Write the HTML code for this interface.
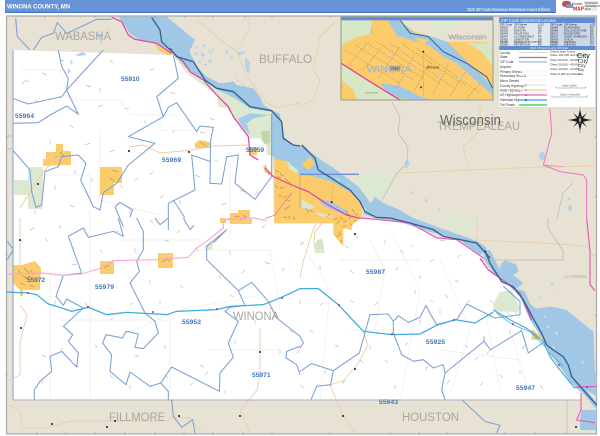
<!DOCTYPE html>
<html><head><meta charset="utf-8"><style>
html,body{margin:0;padding:0;background:#fff;width:600px;height:436px;overflow:hidden}
svg{display:block}
text{font-family:"Liberation Sans",sans-serif}
</style></head><body>
<svg width="600" height="436" viewBox="0 0 600 436" xmlns="http://www.w3.org/2000/svg">
<rect width="600" height="436" fill="#fff"/>
<!-- header -->
<rect x="5" y="0" width="551" height="12" fill="#6593d6"/>
<rect x="5" y="12" width="551" height="1" fill="#3f70c4"/>
<text x="7" y="8.5" font-size="6.2" font-weight="bold" fill="#fff" textLength="63" lengthAdjust="spacingAndGlyphs">WINONA COUNTY, MN</text>
<text x="467" y="11" font-size="4.3" font-weight="bold" fill="#dfe8f7" textLength="83" lengthAdjust="spacingAndGlyphs">2020 ZIP Code Business Reference Insert Edition</text>
<!-- logo -->
<rect x="562" y="1" width="9" height="6" rx="3" fill="#d04a48"/>
<rect x="566" y="4" width="7" height="4" fill="#8b8fc4"/>
<text x="572" y="5" font-size="3.4" fill="#445">Market</text>
<text x="573" y="10.5" font-size="5" font-weight="bold" fill="#d02020">MAPS</text>
<rect x="584" y="1" width="13" height="10" fill="#e9e9e9"/>
<text x="585" y="4" font-size="2.6" fill="#444">BUSINESS</text>
<text x="585" y="7" font-size="2.6" fill="#444">REFERENCE</text>
<text x="585" y="10" font-size="2.6" fill="#444">MAP</text>

<!-- map background -->
<rect x="6.5" y="16" width="590" height="418" fill="#e7e2d4" stroke="#a8a8a8" stroke-width="1.2"/>

<!-- white county -->
<path d="M13 50L173 55L187 73L203 83L220 98L227 108L248 137L249 147L272 147L274 222L360 218L410 223L437 238L457 240L480 255L490 272L505 282L520 293L532 320L545 338L548 353L560 368L572 383L580 393L581 400H13Z" fill="#fff"/>

<!-- faint road lines on white -->
<g fill="none" stroke="#ededed" stroke-width=".7">
<path d="M20 70H60L70 100H120L130 115H175M100 130V200L160 215M30 175H90V260M160 90V130H215M230 160V240M200 250H270L280 310M60 320H170V400M110 340L180 310L260 295M300 240L330 290L320 400M390 230L420 290L400 400M440 260L470 330L450 395M210 350H280M120 240H200M485 310L500 390M350 330H400M370 240L385 270L375 330M340 260H420M510 330L530 395M440 350L520 360M50 270V400M90 240V400"/>
</g>
<!-- small gray ticks -->
<path fill="none" stroke="#bebebe" stroke-width=".7" d="M25 80l4 2M42 73l5 2M22 84l3-3M58 97l3 1M86 85l5 2M100 88v4M125 108l4 1M98 107l5-2M170 92l5 2M210 118l4 2M222 103l4 3M145 120v4M200 132l5 1M85 145l5-2M110 152l4-2M150 175l3-3M160 198l4-3M180 200v5M195 175l5 2M215 160l3 2M240 190l5 2M222 205l4-2M55 185v5M35 210v4M70 205l4 2M92 178v4M130 210v5M150 220l3 3M20 240l3 2M45 238l3 3M72 265l5-1M100 250l3 3M135 248v5M165 240l4 2M195 248l4 3M230 250v5M245 270l-3 3M265 262l5 2M285 268l-3 3M220 275v4M55 300v5M85 303l3 4M110 320l3-2M95 345l3 3M42 355l4 2M42 380v4M75 365l4 2M135 355l4 2M165 345v4M200 365l4 2M235 340v4M205 375l3-3M300 245l4-3M320 265v5M345 245l3 3M300 300v4M350 300l4 3M270 310l3-3M310 330l3 3M280 350v4M335 345l4 2M360 360l3 3M345 380l-3 4M300 385l4 3M400 250l4 3M430 262l4-3M415 290v4M455 280l4 2M470 300l-3 3M440 310v4M395 320l3-3M465 345l3 3M490 350l-3 4M510 330v4M425 370l3-4M395 385v4M450 380l-3 4M480 385l3-3M520 370v4M540 385l3 4M500 265v4M520 295l3 3M530 310l4 2M350 270l3 3M375 305l3-3M440 240l5 1M230 100l3 3M245 125l-4 2
M35 100l3 2M60 60l4 1M110 60l3 3M150 70l4-1M70 125l3 3M50 140v4M140 140l4 1M175 130l-3 3M120 185l3 3M75 170v4M135 180l3-2M255 195l3-3M265 225l-3 3M30 230l4-2M60 225v4M115 230l3 2M180 230l-3 3M150 280v4M180 285l3 3M130 305l3-2M160 300v4M230 295l3 2M60 350l3-2M110 375l3 3M130 385v4M165 375l3 3M190 385l3-2M225 390v4M255 320v4M290 330l3 3M320 305l3-2M300 350l-3 3M325 370v4M370 345v4M385 360l3 3M405 345l3-2M420 320v4M430 300l3 2M475 360l3-3M500 375l3 3M525 345l-3 4M490 300l3 3M510 310l-3 3M355 235l3 3M385 240v4M410 245l3 2M460 255l-3 3M395 270l3-3M420 275v4M445 295l3 3"/>

<!-- ponds on tan -->
<g fill="#b2d1e9" transform="translate(170,40) scale(.33333)">
<path d="M75 15l10 5-4 8zM95 10l12 8-7 5zM70 35l14 5-6 8zM90 35l15 10-8 6zM115 30l10 5-5 8zM130 60l-10 10-8-8zM85 60l10 6-6 6zM100 70l12 4-5 6zM125 25l8 5-4 5zM165 25l12 12-7 3zM178 45l12 10-5 4zM200 38l22-5 4 5-18 8zM225 50l15 18-3 32-10-10zM195 110l12 15-3 3zM215 130l10 8-5 2z"/>
</g>
<g fill="#b2d1e9" transform="translate(480,250) scale(.33333)">
<path d="M195 110l5 3-3 4zM175 135l8 5-4 3zM210 95l12 10-6 3zM230 115l5 10-4-2z"/>
</g>
<g fill="#b4d2e9">
<path d="M300 185l6 4-3 3zM310 180l5 5-2 2zM410 190l3 3-2 2zM425 198l3 3-3 2zM438 208l3 2-2 2zM95 32l8 3-3 6zM100 38l3 4-2 2zM70 60l3 2-2 3zM68 68l3 3-3 3zM75 55l8-3 4 3-8 1z"/>
<ellipse cx="542" cy="156" rx="3" ry="4.5"/>
<ellipse cx="570" cy="208" rx="2" ry="3"/><ellipse cx="569" cy="199" rx="1.2" ry="1.6"/>
<circle cx="407" cy="163" r="2.5"/><circle cx="406" cy="167" r="1.5"/>
</g>

<!-- green -->
<g fill="#dce8cf">
<path transform="translate(170,40) scale(.33333)" d="M50 100L100 120L140 150L195 175L240 205L305 215V345L240 345L238 295L190 225L170 205L145 200L140 165Z"/>
<path d="M28 167H43V190L42 209H28V195H14V180H28Z"/>
<path d="M205 245L213 243L212 250H206Z"/>
<path d="M313 243L323 240L325 253L315 253Z"/>
<path d="M360 174H397L383 200L400 218H437L457 235L473 231L477 218H413L383 203L360 190Z"/>
<path transform="translate(480,250) scale(.33333)" d="M40 160L60 125L95 120L120 175L110 190L95 185L40 185Z"/>
</g>
<path transform="translate(170,40) scale(.33333)" fill="#c2d6ad" d="M272 275L300 272V310L280 312Z"/>
<path transform="translate(170,40) scale(.33333)" fill="#fff" d="M238 295H270L290 320V345H240Z"/>

<!-- water -->
<g fill="#a0c7e5">
<path transform="translate(170,40) scale(.33333)" d="M-155 -70L-10 -70L75 0L58 35L85 85L110 110L150 130L190 125L200 135L250 145L270 170L280 195L305 210L330 222L340 290L370 315L390 318V350L305 350L305 215L240 205L195 175L145 150L100 120L45 80L0 30L-40 10L-90 0L-120 -20Z"/>
<path transform="translate(170,40) scale(.33333)" fill="#a6cbe7" d="M205 235L240 220L300 225L250 235L230 250L240 285L225 270L210 250Z"/>
</g>
<!-- Winona block -->
<g transform="translate(265,145) scale(.33333)">
<path fill="#fbcb6c" d="M28 35V235H205V268L235 305V250L260 255V240L280 225L290 215V170L280 150L245 130L200 100L175 88H105L60 45Z"/>
<path fill="#a0c7e5" d="M25 0L115 0L130 15L175 50L200 65L280 125L310 165L330 195V215L300 190L270 150L200 110L150 95L105 88L70 50L28 40Z"/>
<path fill="#fbcb6c" d="M110 60L135 35L150 55L130 75Z"/>
<path fill="#dce8cf" d="M70 55L100 75L95 85L70 70ZM110 165L150 185L130 195L110 190ZM150 200L210 215L170 215Z"/>
<path fill="#a0c7e5" d="M155 160L200 170L240 195L255 210L230 205L180 185Z"/>
<path fill="#b9d8df" d="M205 90l25 18-10 2zM240 110l20 14-8 2z" />
<path fill="none" stroke="#9c987c" stroke-width="1.5" d="M105 88V190"/>
<path fill="none" stroke="#a48c50" stroke-width="1.9" d="M30 75l12 6M45 85l10 8M35 95l12 3M60 100l8 8M70 110l8 5M40 150l12 6M55 160l10-8M65 165l12 4M80 145l-8 10M60 195l15-14M70 212l6 10M85 215l4 10M120 190l10 6M125 205l8-8M135 195l10 6M55 215l10 3M205 225l12-5M215 235l10-8M225 215l8 10M235 232l10-6M245 205l10 6M250 222l10-8M262 192l6 12M270 210l10-2M240 195l8 8M255 235l8 8M222 260l6 10M215 275l8-4M230 285l-3 8M195 205l-8 10M235 245l8-4M30 120l8 10M45 130l12-4M275 225l-8 6"/>
<path fill="none" stroke="#f3b35c" stroke-width="2" d="M205 110L200 170M170 235L150 260L146 290"/>
<circle cx="200" cy="171" r="3" fill="#101060"/>
<path fill="none" stroke="#6b93d4" stroke-width="4" d="M105 88H282"/>
<path fill="#d3e3c4" d="M155 285L170 282L175 310L155 313Z"/>
</g>

<!-- main river continued -->
<g fill="#a0c7e5">
<path d="M375 197L383 203L400 210L413 218L440 228L460 235L477 241L487 248L480 255L457 238L430 232L400 222L375 218L363 214Z"/>
<path transform="translate(480,250) scale(.33333)" d="M10 0H30L60 60L65 40L75 30L110 45L115 65L100 75L130 100L110 115L135 125L150 160L165 175L215 170L260 180L340 245L345 380H290L350 460V480L310 430L270 395L240 350L205 300L170 240L150 210L120 140L80 100L40 70L12 25Z"/>
<path transform="translate(480,250) scale(.33333)" d="M285 380H350V440L320 420Z"/>
<path transform="translate(480,250) scale(.33333)" d="M305 480H350V540H300V510Z"/>
<path transform="translate(480,250) scale(.33333)" fill="#e7e2d4" d="M200 225l10 5-5 5zM225 245l10 6-5 4zM300 320l12 20-4 2zM190 195l8 6-4 3zM215 285l12 8-6 3zM160 150l12 10-6 2z"/>
</g>

<!-- orange -->
<g fill="#fbcb6c">
<path d="M56 144H63V151H71V165L43 166V159H46V152H56Z"/>
<path d="M100 167H122V183H114V195H100Z"/>
<path d="M195 143L200 140L210 142V148H195Z"/>
<path d="M153 42L173 55L167 55L158 50L157 47Z"/>
<path d="M249 147L257 147V155L249 155Z"/>
<path d="M263 165L272 173L265 173Z"/>
<path d="M230 213H238V210H250V218H252V224H230Z"/>
<path d="M220 218H226V223H220Z"/>
<path d="M13 265H22L35 261L41 268L40 290L23 290V296L20 296V290L13 283Z"/>
<path d="M100 261H114V274H100Z"/>
<path d="M158 253H173V268H158Z"/>
<path transform="translate(480,250) scale(.33333)" d="M155 235L190 265L155 270Z"/>
</g>
<!-- city grain -->
<path fill="none" stroke="#a48c50" stroke-width=".6" d="M60 152l4 4M55 158l6-3M200 142l5 3M207 146l-4 2M22 275l5 4M30 270l4 5M20 283l5 2M29 285l5 2M234 216l6 1M243 215l4 2M112 170l6 2M110 178l4 3M165 258l5 3M104 268l6-3M536 335l3 3M535 338l4 2M18 270l3 4M25 278l6-2M162 262l8-4M24 268l5 5M240 220l5-3"/>

<!-- tan-area roads -->
<g fill="none" stroke="#ebcfa6" stroke-width=".9">
<path d="M197 20L217 37L237 52L247 77L267 103L277 108L300 103M248 17L250 27L237 52"/>
<path d="M300 107L313 100L320 80L313 70L320 37L337 20"/>
<path d="M480 102V130L463 147L470 173M400 173L540 167L595 166"/>
<path d="M477 218V240L540 243L587 246L595 258"/>
<path d="M8 405L20 411L22 428L45 428L72 421H167L173 417L190 418L202 433"/>
<path d="M363 331L368 345L357 365L343 381L330 385L343 415L355 433"/>
<path d="M260 328V375L257 390L240 411L250 433"/>
<path d="M20 218V268M20 305L27 315L20 342V375L8 381"/>
<path d="M129 147L143 145L160 153L192 150L213 146L248 145"/>
<path d="M20 208L43 172L60 155"/>
<path d="M300 278L303 262L313 230L317 222"/>
</g>
<g fill="none" stroke="#b9b9b0" stroke-width=".7">
<path d="M392 102L400 117L398 133L408 147L407 163L397 173L382 200"/>
<path d="M573 183L563 193L557 218"/>
<path d="M548 218V228L563 251V260H480"/>
<path d="M567 400V433"/>
</g>
<!-- county lines -->
<path d="M13 50V400H581" fill="none" stroke="#a8b0bc" stroke-width=".9"/>
<path d="M7 136H13M7 149H13" fill="none" stroke="#b5b5b5" stroke-width=".7"/>

<!-- ZIP boundaries -->
<g fill="none" stroke="#7ca2d2" stroke-width="1" stroke-linejoin="round">
<path d="M13 50V400"/>
<g transform="scale(.33333)" stroke-width="3.2">
<path d="M47 55L52 110L90 150M100 150L125 112L160 100L172 68L200 100L290 58L335 58"/>
<path d="M175 150L185 200L205 235L200 270L310 150M200 270L235 343L200 318L150 345L115 368L38 370M38 295L85 312L185 290L200 270"/>
<path d="M38 450L90 510L95 575L108 622L125 615L135 515L175 500L185 470L235 465L258 490L242 540L280 620L300 630L310 578L350 550L385 495L465 430L385 410L490 350L470 290L535 235L520 165"/>
<path d="M490 350L505 322L530 308L590 395L600 378L640 382L632 420L630 550L665 552L680 470L715 465L705 550L765 598L815 530L815 340"/>
<path d="M632 485L575 465L585 570L505 610L505 654M505 654L505 690"/>
<path d="M345 620L360 607L398 630L390 652M345 620L370 680M520 600L555 654"/>
</g>
<g transform="translate(0,218) scale(.33333)" stroke-width="3.2">
<path d="M22 70L40 95L22 125"/>
<path d="M205 55L250 30L265 58L340 40L370 55L355 0M205 55L245 165L190 172L168 235L190 262L200 243L250 270L190 325L218 350L205 370L235 405L230 447L185 400L150 415L155 460L120 490L103 515V545"/>
<path d="M410 0L430 40V95L410 130L418 160L390 195L435 285L465 310L475 345L430 392L405 388L415 348L378 340L368 360L318 350L308 375L335 410L330 460L378 500L390 462L450 505L482 495L515 447L658 520L660 465L700 418L685 375L715 310L675 280L690 268L735 262L715 218L755 193L805 250L830 300L900 355"/>
<path d="M620 85V125L715 218M620 85L680 35L640 75"/>
<path d="M482 495L505 520V545M515 545L520 595L545 628L578 605L585 645M465 0L480 20L505 0M550 0L570 35L582 22"/>
<path d="M900 385L860 400L858 420L890 440L900 470"/>
</g>
<g transform="translate(300,218) scale(.33333)" stroke-width="3.2">
<path d="M0 355L10 375L0 390"/>
<path d="M0 460L35 437L100 458L178 405L210 290L265 288L280 310V345L305 410L340 430L370 425L400 450L430 440L435 465L552 370L572 395L665 338L685 405L735 370"/>
<path d="M435 465L425 515L435 545M100 458L92 500L50 505L33 545"/>
<path d="M280 310L295 293L325 313L360 298L378 262L395 295L410 320L470 305L500 258L585 300L660 290V250L610 205"/>
<path d="M485 545L555 610L600 622L590 645M552 370V355"/>
</g>
</g>

<!-- highways -->
<g fill="none">
<g transform="translate(0,218) scale(.33333)">
<path d="M20 168L125 165L190 172L245 168L305 150L340 128L470 125L565 118L590 90L620 70L670 30L670 10L690 0M680 5L760 0L800 8" stroke="#f4a9d5" stroke-width="3.4"/>
<path d="M20 222L85 225L110 230L145 258L170 265L215 280L265 268L320 290L380 283L500 290L530 280L650 275L690 265L790 260L845 238L900 212" stroke="#3fa9dc" stroke-width="3.8"/>
</g>
<g transform="translate(300,218) scale(.33333)">
<path d="M0 212H55L115 260L190 340L275 350L360 348L410 322L465 305L525 315L580 282" stroke="#3fa9dc" stroke-width="3.8"/>
<path d="M180 0L240 5L330 15L410 60L470 65L550 120" stroke="#e858b0" stroke-width="3.4"/>
<path d="M860 0L870 100V200L885 218" stroke="#e858b0" stroke-width="3.4"/>
</g>
<g transform="translate(480,250) scale(.33333)">
<path d="M0 25L25 60L75 95L120 130L155 210" stroke="#e03fa5" stroke-width="3.4"/>
<path d="M40 180L100 215L140 235L160 250L190 275L210 320L240 360L285 415" stroke="#3fa9dc" stroke-width="3.4"/>
<path d="M50 190L100 225L150 245L195 290M205 305L250 350" stroke="#3fa9dc" stroke-width="2.2"/>
<path d="M303 430V480L290 510L345 518M285 412L320 410H350" stroke="#e858b0" stroke-width="3.2"/>
<path d="M15 0L30 40L65 95L100 110L130 150L165 215L185 250L200 285L220 300L250 320L265 345L275 380L310 420L350 465" stroke="#35608e" stroke-width="4"/>
</g>
<g transform="scale(.33333)">
<path d="M335 52L365 65L385 105L405 118L470 130L515 160" stroke="#e03fa5" stroke-width="3.6"/>
<path d="M455 52L480 90L485 125L510 150" stroke="#35608e" stroke-width="4"/>
</g>
<g transform="translate(170,40) scale(.33333)">
<path d="M0 30L40 65L60 95L100 120L140 165L175 200L190 230L235 290L238 320L240 345L265 360" stroke="#e03fa5" stroke-width="3.6"/>
<path d="M0 25L20 50L70 65L105 120L140 145L190 155L240 200L305 212L335 245L340 295L370 315L390 318" stroke="#35608e" stroke-width="4"/>
</g>
<g transform="translate(265,145) scale(.33333)">
<path d="M0 70L25 95L80 120L130 140L190 180L245 210L285 220" stroke="#e03fa5" stroke-width="3.6"/>
<path d="M0 60L12 90M0 220L30 210L55 175L80 145" stroke="#ec78bd" stroke-width="2.6"/>
<path d="M110 0L150 40L160 75L200 100L255 135L285 170L300 200L330 215" stroke="#35608e" stroke-width="4"/>
</g>
<g transform="translate(300,0) scale(.33333)">
<path d="M750 325L755 400L730 495L780 515L850 525L860 540V654" stroke="#ec78bd" stroke-width="3.2"/>
<path d="M730 495L790 500" stroke="#ec78bd" stroke-width="2"/>
</g>
<g transform="translate(300,218) scale(.33333)">
<path d="M225 -2L270 0L330 15L400 35L430 55L530 75L570 120" stroke="#35608e" stroke-width="4"/>
</g>
</g>

<!-- city dots -->
<g fill="#101060">
<circle cx="129" cy="151" r="1"/><circle cx="189" cy="152" r="1"/><circle cx="38" cy="184" r="1"/><circle cx="20" cy="240" r="1"/><circle cx="21" cy="328" r="1"/><circle cx="260" cy="352" r="1"/><circle cx="52" cy="424" r="1"/><circle cx="115" cy="421" r="1"/><circle cx="107" cy="427" r="1"/><circle cx="179" cy="416" r="1"/><circle cx="240" cy="416" r="1"/><circle cx="355" cy="234" r="1"/><circle cx="355" cy="369" r="1"/><circle cx="343" cy="416" r="1"/><circle cx="576" cy="427" r="1"/>
</g>
<g fill="#a04080">
<circle cx="88" cy="307" r="1.1"/><circle cx="153" cy="312" r="1"/><circle cx="217" cy="309" r="1"/><circle cx="282" cy="298" r="1"/><circle cx="28" cy="293" r="1"/><circle cx="339" cy="305" r="1"/><circle cx="392" cy="334" r="1"/><circle cx="454" cy="320" r="1"/><circle cx="513" cy="324" r="1"/><circle cx="559" cy="365" r="1"/><circle cx="587" cy="387" r="1"/>
</g>

<!-- county names -->
<g fill="#a9a69c" font-size="11.5">
<text x="55" y="40" textLength="56" lengthAdjust="spacingAndGlyphs">WABASHA</text>
<text x="259" y="63" textLength="53" lengthAdjust="spacingAndGlyphs">BUFFALO</text>
<text x="437" y="130" textLength="83" lengthAdjust="spacingAndGlyphs">TREMPEALEAU</text>
<text x="233" y="320" textLength="46" lengthAdjust="spacingAndGlyphs">WINONA</text>
<text x="109" y="421" textLength="56" lengthAdjust="spacingAndGlyphs">FILLMORE</text>
<text x="402" y="421" textLength="57" lengthAdjust="spacingAndGlyphs">HOUSTON</text>
<text x="564" y="278" font-size="4.2" textLength="23">LA CROSSE</text>
</g>
<text x="440" y="125" font-size="14.5" fill="#666" textLength="61" lengthAdjust="spacingAndGlyphs">Wisconsin</text>

<!-- ZIP labels -->
<g fill="#3f73b8" font-size="6.6" font-weight="bold">
<text x="121" y="81" textLength="18.5">55910</text>
<text x="15" y="118" textLength="19">55964</text>
<text x="162" y="162" textLength="19">55969</text>
<text x="246" y="152" textLength="18">55959</text>
<text x="27" y="282" textLength="18">55972</text>
<text x="95" y="289" textLength="19">55979</text>
<text x="182" y="324" textLength="19">55952</text>
<text x="252" y="377" textLength="18.5">55971</text>
<text x="366" y="274" textLength="19">55987</text>
<text x="426" y="344" textLength="19">55925</text>
<text x="516" y="390" textLength="19">55947</text>
<text x="379" y="404" textLength="19">55943</text>
</g>

<!-- inset -->
<svg x="341" y="17" width="152" height="83" viewBox="341 17 152 83">
<rect x="341" y="17" width="152" height="83" fill="#fbcb6c"/>
<g transform="translate(300,0) scale(.33333)">
<path d="M124 60H215L215 100L160 115L125 135Z" fill="#d7e6c7"/>
<path d="M295 60H580V130L540 125L440 125L380 105L345 95Z" fill="#e7e2d4"/>
<path d="M380 60H470L440 105L395 100Z" fill="#dce8cf"/>
<path d="M500 130L580 130V200L540 150Z" fill="#d7e6c7"/>
<path d="M295 60L345 100L380 105L440 125L578 258V285L470 190L430 170L385 135L300 110L210 100L215 75L240 105L290 105L262 60Z" fill="#a0c7e5"/>
<path d="M340 112L385 118L372 135Z" fill="#fbcb6c"/>
<path d="M215 60H262L292 110L215 102Z" fill="#fbcb6c"/>
<path d="M240 250L300 258L362 290L335 300L300 295L260 275Z" fill="#a0c7e5"/>
<path d="M320 282L395 298L345 300Z" fill="#a0c7e5"/>
<path d="M124 190L300 300H172L160 270L124 240Z" fill="#d7e6c7"/>
<path d="M124 190L218 250L300 300" fill="none" stroke="#e8308f" stroke-width="3.6"/>
<path d="M300 60L330 100L385 110L430 155L500 190L560 230L578 265" fill="none" stroke="#35608e" stroke-width="3"/>
<path fill="none" stroke="#b38f4e" stroke-width="1.6" stroke-dasharray="5 4" d="M135 150L300 250M165 135L340 240M195 125L370 235M230 125L420 250M270 130L470 270M310 135L500 260M350 145L540 280M150 190L200 130M190 210L250 135M235 235L300 140M290 265L345 160M345 270L395 175M400 280L445 195M450 290L495 215M500 295L540 250"/>
<path d="M370 155V290" fill="none" stroke="#ecaa55" stroke-width="2"/>
<g fill="#bcdbe5"><circle cx="345" cy="190" r="4"/><circle cx="420" cy="230" r="4"/><circle cx="480" cy="235" r="4"/><circle cx="270" cy="165" r="4"/><circle cx="320" cy="235" r="3"/></g>
<circle cx="370" cy="155" r="2.6" fill="#111"/><circle cx="363" cy="262" r="2.6" fill="#111"/>
<text x="445" y="119" font-size="21" fill="#b3afa5" stroke="#777" stroke-width=".35" textLength="115" lengthAdjust="spacingAndGlyphs">Wisconsin</text>
<text x="200" y="217" font-size="29" fill="#9db4cd" textLength="135" lengthAdjust="spacingAndGlyphs">WINONA</text>
<text x="270" y="212" font-size="16" font-weight="bold" fill="#3f63a8" textLength="32" lengthAdjust="spacingAndGlyphs">55987</text>
<text x="380" y="206" font-size="11" fill="#222">Winona</text>
<text x="195" y="280" font-size="6" fill="#4d7a4d">MCGILLIVRAY</text>
</g>
<rect x="341" y="17" width="152" height="3.3" fill="#5e8dd3"/>
</svg>
<rect x="341" y="17" width="152" height="83" fill="none" stroke="#949a88" stroke-width="1"/>

<!-- legend -->
<rect x="499" y="17" width="96.5" height="90.5" fill="#fff"/>
<rect x="499" y="17" width="96.5" height="6" fill="#5e8dd3"/>
<text x="501" y="21.8" font-size="4.2" fill="#f0f4fb" textLength="55" lengthAdjust="spacingAndGlyphs">ZIP Code Index/Grid Locator</text>
<rect x="499" y="23" width="96" height="23" fill="#dfe6f0"/>
<rect x="550" y="23" width="45" height="23" fill="#c9d7e8"/>
<g font-size="2.9" fill="#222">
<text x="500" y="25.5">ZIP Code</text><text x="514" y="25.5">ZIP Name</text><text x="538" y="25.5">LOC</text><text x="550" y="25.5">ZIP Code</text><text x="564" y="25.5">ZIP Name</text><text x="590" y="25.5">LOC</text>
<text x="500" y="28.5">55910</text><text x="514" y="28.5">ALTURA</text><text x="538" y="28.5">B3</text><text x="550" y="28.5">55964</text><text x="564" y="28.5">PLAINVIEW</text><text x="590" y="28.5">B3</text>
<text x="500" y="31.5">55925</text><text x="514" y="31.5">DAKOTA</text><text x="538" y="31.5">D8</text><text x="550" y="31.5">55969</text><text x="564" y="31.5">ROLLINGSTONE</text><text x="590" y="31.5">B6</text>
<text x="500" y="34.5">55943</text><text x="514" y="34.5">HOUSTON</text><text x="538" y="34.5">F7</text><text x="550" y="34.5">55971</text><text x="564" y="34.5">RUSHFORD</text><text x="590" y="34.5">E6</text>
<text x="500" y="37.5">55947</text><text x="514" y="37.5">LA CRESCENT</text><text x="538" y="37.5">F9</text><text x="550" y="37.5">55972</text><text x="564" y="37.5">SAINT CHARLES</text><text x="590" y="37.5">D2</text>
<text x="500" y="40.5">55952</text><text x="514" y="40.5">LEWISTON</text><text x="538" y="40.5">D5</text><text x="550" y="40.5">55979</text><text x="564" y="40.5">UTICA</text><text x="590" y="40.5">D3</text>
<text x="500" y="43">55959</text><text x="514" y="43">MINNESOTA CITY</text><text x="538" y="43">B6</text><text x="550" y="43">55987</text><text x="564" y="43">WINONA</text><text x="590" y="43">C7</text>
<text x="500" y="45.5">55962</text><text x="514" y="45.5">PETERSON</text><text x="538" y="45.5">E4</text><text x="550" y="45.5">55987</text><text x="564" y="45.5">WINONA</text><text x="590" y="45.5">C7</text>
</g>
<rect x="499" y="46" width="96.5" height="4" fill="#5e8dd3"/>
<text x="530" y="49" font-size="2.8" fill="#e8eefa">2020 Winona County, MN Map</text>
<g font-size="3.2" fill="#333">
<text x="500" y="54">County</text><text x="500" y="58">State</text><text x="500" y="63">ZIP Code</text><text x="500" y="68">Airports</text><text x="500" y="73">Primary Streets</text><text x="500" y="77">Secondary Streets</text><text x="500" y="82">Minor Streets</text><text x="500" y="87">County Highways</text><text x="500" y="91.5">State Highways</text><text x="500" y="96">US Highways</text><text x="500" y="101">Interstate Highways</text><text x="500" y="106">Toll Roads</text>
</g>
<g fill="none">
<path d="M519 52.5H547" stroke="#d6d6d6" stroke-width="1"/>
<path d="M519 57.5H547" stroke="#8a8a8a" stroke-width="1.3"/>
<path d="M519 62H547" stroke="#b7cfe8" stroke-width="1.8"/>
<path d="M519 71H547M519 75.5H547M519 80H547" stroke="#eeeeee" stroke-width=".8"/>
<path d="M519 85H547" stroke="#e5e5e5" stroke-width="1.2"/>
<path d="M519 90H547" stroke="#fbd9a3" stroke-width="1.6"/>
<path d="M519 95H547" stroke="#f48fce" stroke-width="1.8"/>
<path d="M519 100H547" stroke="#7fc7ea" stroke-width="2"/>
<path d="M519 105H547" stroke="#7ee07a" stroke-width="2"/>
</g>
<circle cx="526" cy="85" r="1" fill="#aaa"/><circle cx="526" cy="90" r="1" fill="#caa46a"/><circle cx="526" cy="95" r="1" fill="#c060a0"/><circle cx="526" cy="100" r="1" fill="#5050a0"/>
<g font-size="3" fill="#333">
<text x="550" y="52.5">Cities/Large Towns</text><text x="550" y="56">Cities 100,000 and Above</text><text x="550" y="61">Cities 50,000 - 99,999</text><text x="550" y="65.5">Cities 25,000 - 49,999</text><text x="550" y="70">Cities 10,000 - 24,999</text><text x="550" y="75">Cities 5,000 and Below</text>
</g>
<text x="577" y="58" font-size="7.5" fill="#111">City</text>
<text x="578" y="63" font-size="5.8" fill="#333">City</text>
<text x="578" y="67" font-size="4.5" fill="#333">City</text>
<text x="578" y="71" font-size="3.4" fill="#333">City</text>
<text x="578" y="75" font-size="3" fill="#333">City</text>
<g fill="none" stroke="#6e8db5" stroke-width=".6">
<path d="M556 88H586M556 88v-1.5M586 88v-1.5M571 88v-1"/>
<path d="M552 97H587M552 97v-1.5M587 97v-1.5M570 97v-1"/>
</g>
<text x="562" y="86.5" font-size="2.4" fill="#555">Scale in Miles</text>
<text x="560" y="95.5" font-size="2.4" fill="#555">Scale in Kilometers</text>
<rect x="499" y="17" width="96.5" height="90.5" fill="none" stroke="#d6d6d6" stroke-width=".6"/>

<!-- compass -->
<g transform="translate(580,120)">
<path d="M0-11L2-2L11 0L2 2L0 11L-2 2L-11 0L-2-2Z" fill="#111"/>
<path d="M-7-7L0-1.5L7-7L1.5 0L7 7L0 1.5L-7 7L-1.5 0Z" fill="#111"/>
<path d="M0-4L1 0L0 4L-1 0Z" fill="#fff"/>
<path d="M-13 0H13M0-13V13" stroke="#555" stroke-width=".4"/>
</g>

<!-- frame ticks -->
<path d="M45 16v1.4M95 16v1.4M125 16v1.4M155 16v1.4M185 16v1.4M213 16v1.4M245 16v1.4M272 16v1.4M330 16v1.4M37 434v-1.4M66 434v-1.4M95 434v-1.4M125 434v-1.4M155 434v-1.4M184 434v-1.4M213 434v-1.4M243 434v-1.4M272 434v-1.4M330 434v-1.4M390 434v-1.4M419 434v-1.4M447 434v-1.4M505 434v-1.4M535 434v-1.4M565 434v-1.4M6 77h1.4M6 107h1.4M6 137h1.4M6 197h1.4M6 255h1.4M6 315h1.4M6 375h1.4M596 137h-1.4M596 197h-1.4M596 255h-1.4M596 315h-1.4M596 375h-1.4" stroke="#777" stroke-width=".6" fill="none"/>
</svg>
</body></html>
